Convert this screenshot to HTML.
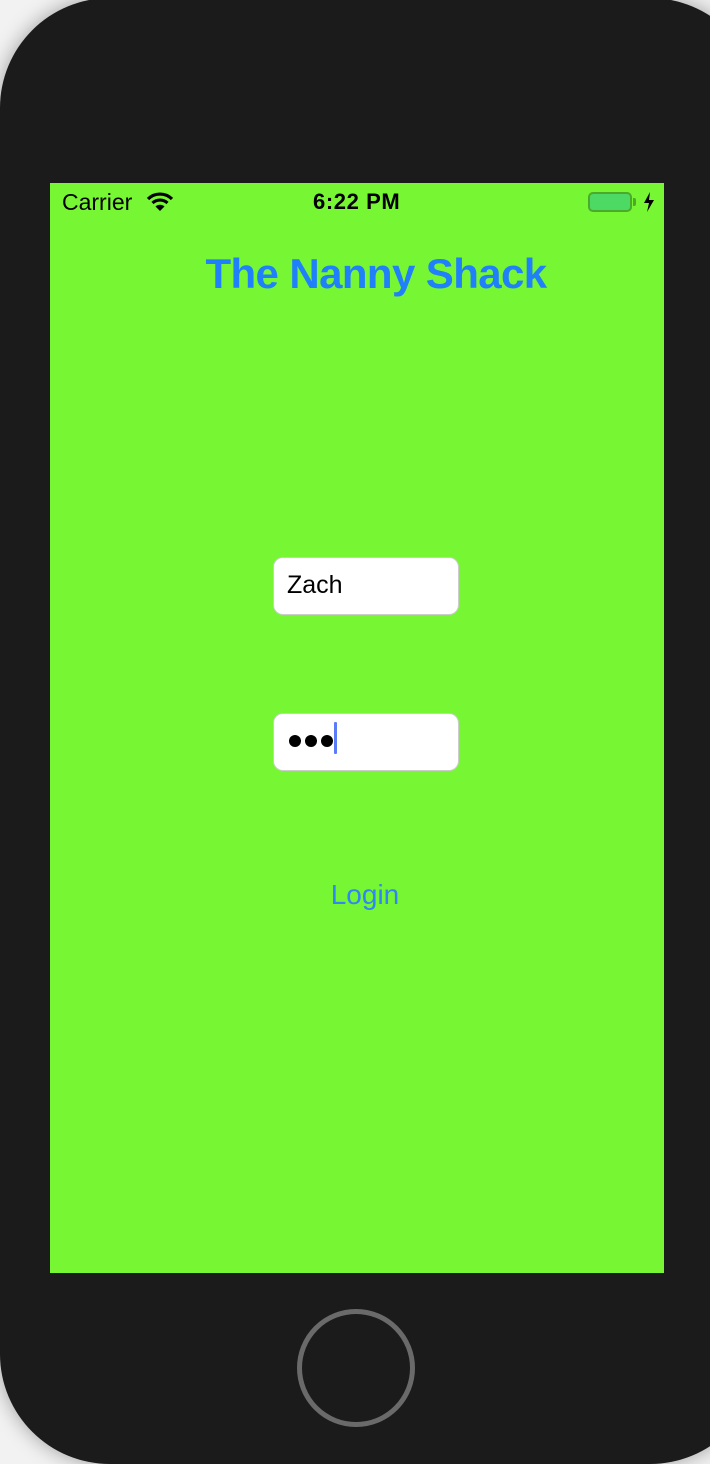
<!DOCTYPE html>
<html><head><meta charset="utf-8"><style>
html,body{margin:0;padding:0;width:710px;height:1464px;overflow:hidden;background:#f2f2f2;font-family:"Liberation Sans",sans-serif}
.phone{position:absolute;left:0;top:-2px;width:760px;height:1466px;background:#1b1b1b;border-radius:110px 110px 110px 110px;box-shadow:0 0 20px rgba(0,0,0,.35)}
.screen{position:absolute;left:50px;top:183px;width:614px;height:1090px;background:#77f633}
.sb{position:absolute;top:189px;font-size:23px;color:#000}
.title{position:absolute;left:0;width:752px;text-align:center;top:250px;font-weight:bold;font-size:42px;color:#1f80fa;letter-spacing:-0.6px}
.field{position:absolute;left:274px;width:184px;height:56px;background:#fff;border-radius:9px;box-shadow:0 0 0 1px #ccc}
.dot{position:absolute;top:735px;width:12px;height:12px;border-radius:50%;background:#000}
.home{position:absolute;left:297px;top:1309px;width:108px;height:108px;border:5px solid #6a6a6a;border-radius:50%}
</style></head><body>
<div class="phone"></div>
<div class="screen"></div>
<div class="sb" style="left:62px">Carrier</div>
<svg style="position:absolute;left:146px;top:191px" width="28" height="22" viewBox="0 0 28 22">
<path d="M2 8 A17 17 0 0 1 26 8" stroke="#000" stroke-width="3.2" fill="none"/>
<path d="M6.5 12 A11 11 0 0 1 21.5 12" stroke="#000" stroke-width="3.2" fill="none"/>
<path d="M14 20 L9.5 15.5 A6.5 6.5 0 0 1 18.5 15.5 Z" fill="#000"/>
</svg>
<div class="sb" style="left:313px;font-weight:bold;font-size:22px;letter-spacing:0.6px">6:22 PM</div>
<div style="position:absolute;left:588px;top:192px;width:44px;height:20px;border:2px solid #4caa2b;border-radius:5px;box-sizing:border-box;background:#4cd964"></div>
<div style="position:absolute;left:633px;top:198px;width:3px;height:8px;background:#4caa2b;border-radius:0 2px 2px 0"></div>
<svg style="position:absolute;left:643px;top:192px" width="12" height="20" viewBox="0 0 12 20"><path d="M7 0 L1 11 L6 11 L4 20 L11 8 L6 8 Z" fill="#000"/></svg>
<div class="title">The Nanny Shack</div>
<div class="field" style="top:558px"></div>
<div style="position:absolute;left:287px;top:571px;font-size:25px;color:#000">Zach</div>
<div class="field" style="top:714px"></div>
<div class="dot" style="left:289px"></div><div class="dot" style="left:305px"></div><div class="dot" style="left:321px"></div>
<div style="position:absolute;left:334px;top:722px;width:3px;height:32px;background:#5a7cf7;border-radius:1px"></div>
<div style="position:absolute;left:0;width:730px;text-align:center;top:879px;font-size:28px;color:#2f87f5">Login</div>
<div class="home"></div>
</body></html>
